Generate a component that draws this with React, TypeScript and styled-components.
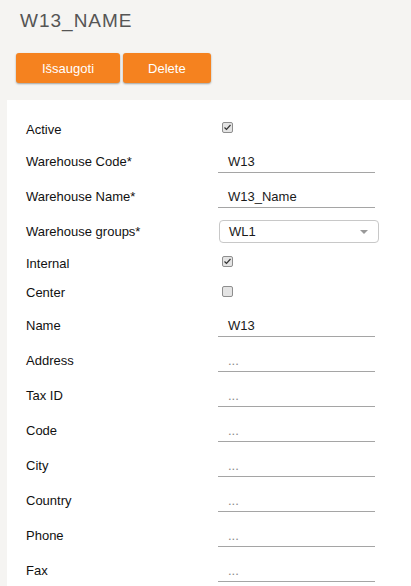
import React from "react";
import styled, { createGlobalStyle } from "styled-components";

const Global = createGlobalStyle`
  html, body { margin: 0; padding: 0; background: #f5f4f2; }
  body { font-family: "Liberation Sans", Arial, sans-serif; overflow: hidden; }
  * { box-sizing: border-box; }
`;

const Page = styled.div`
  width: 411px;
  height: 586px;
  display: flex;
  flex-direction: column;
  background: #f5f4f2;
`;

const Header = styled.div`
  padding: 10px 0 0 20px;
`;

const Title = styled.h1`
  margin: 0;
  font-family: "Liberation Sans", Arial, sans-serif;
  font-weight: normal;
  font-size: 19px;
  line-height: 22px;
  letter-spacing: 1px;
  color: #555;
`;

const Toolbar = styled.div`
  display: flex;
  gap: 3px;
  padding: 21px 0 17px 16px;
`;

const Button = styled.button<{ $pad: number }>`
  height: 30px;
  padding: 0 ${(p) => p.$pad}px;
  border: none;
  border-radius: 3px;
  background: #f5821f;
  color: #fff;
  font-family: "Liberation Sans", Arial, sans-serif;
  font-size: 13px;
  box-shadow: 0 1px 2px rgba(0, 0, 0, 0.35);
  cursor: pointer;
`;

const Panel = styled.div`
  flex: 1;
  margin-left: 7px;
  background: #fff;
  padding: 14px 0 0 19px;
`;

const Row = styled.div<{ $h: number }>`
  display: grid;
  grid-template-columns: 192px 160px;
  align-items: center;
  height: ${(p) => p.$h}px;
`;

const Label = styled.label`
  font-size: 13px;
  color: #111;
`;

const Input = styled.div<{ $placeholder?: boolean }>`
  width: 157px;
  height: 22px;
  border-bottom: 1px solid #a5a5a5;
  padding: 0 0 0 10px;
  display: flex;
  align-items: center;
  font-size: 13px;
  color: ${(p) => (p.$placeholder ? "#888" : "#1a1a1a")};
`;

const Select = styled.div`
  width: 160px;
  height: 23px;
  margin-left: 1px;
  border: 1px solid #c8c8c8;
  border-radius: 4px;
  display: flex;
  align-items: center;
  justify-content: space-between;
  padding: 0 10px 0 9px;
  font-size: 13px;
  color: #1a1a1a;
`;

const Caret = styled.span`
  width: 0;
  height: 0;
  border-left: 4px solid transparent;
  border-right: 4px solid transparent;
  border-top: 4px solid #999;
`;

const Check = styled.span`
  width: 11px;
  height: 11px;
  margin-left: 4px;
  margin-top: -3px;
  border: 1px solid #8e8e8e;
  border-radius: 2px;
  background: #e4e4e4;
  display: flex;
  align-items: center;
  justify-content: center;
`;

type Field =
  | { kind: "check"; label: string; checked: boolean; h?: number }
  | { kind: "text"; label: string; value?: string }
  | { kind: "select"; label: string; value: string };

const fields: Field[] = [
  { kind: "check", label: "Active", checked: true },
  { kind: "text", label: "Warehouse Code*", value: "W13" },
  { kind: "text", label: "Warehouse Name*", value: "W13_Name" },
  { kind: "select", label: "Warehouse groups*", value: "WL1" },
  { kind: "check", label: "Internal", checked: true, h: 28 },
  { kind: "check", label: "Center", checked: false, h: 31 },
  { kind: "text", label: "Name", value: "W13" },
  { kind: "text", label: "Address" },
  { kind: "text", label: "Tax ID" },
  { kind: "text", label: "Code" },
  { kind: "text", label: "City" },
  { kind: "text", label: "Country" },
  { kind: "text", label: "Phone" },
  { kind: "text", label: "Fax" },
];

const CheckMark = () => (
  <svg width="9" height="9" viewBox="0 0 9 9">
    <path d="M1.5 4.5 L3.5 6.5 L7.5 2" fill="none" stroke="#333" strokeWidth="1.2" />
  </svg>
);

export default function App() {
  return (
    <Page>
      <Global />
      <Header>
        <Title>W13_NAME</Title>
      </Header>
      <Toolbar>
        <Button $pad={26}>Išsaugoti</Button>
        <Button $pad={25}>Delete</Button>
      </Toolbar>
      <Panel>
        {fields.map((f) => (
          <Row
            key={f.label}
            $h={f.kind === "check" ? f.h ?? 30 : 35}
          >
            <Label>{f.label}</Label>
            {f.kind === "check" && <Check>{f.checked && <CheckMark />}</Check>}
            {f.kind === "text" && (
              <Input $placeholder={!f.value}>{f.value ?? "..."}</Input>
            )}
            {f.kind === "select" && (
              <Select>
                {f.value}
                <Caret />
              </Select>
            )}
          </Row>
        ))}
      </Panel>
    </Page>
  );
}
